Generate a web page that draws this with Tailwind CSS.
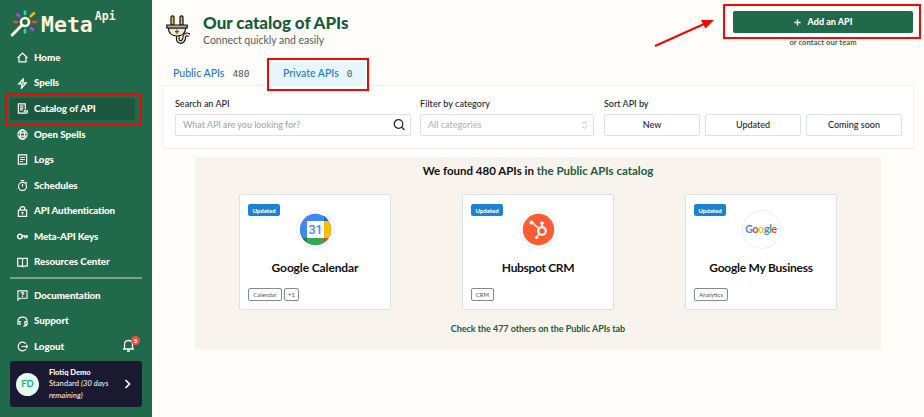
<!DOCTYPE html>
<html lang="en">
<head>
<meta charset="utf-8">
<title>Meta API</title>
<script src="https://cdn.jsdelivr.net/npm/@tailwindcss/browser@4"></script>
</head>
<body class="relative flex h-[417px] w-[924px] overflow-hidden bg-[#fffdfa] font-['Lato',sans-serif] text-[#212529]">
<aside class="flex h-full w-[152px] shrink-0 flex-col bg-[#20694a] px-2.5 text-[#fffdf5]">
  <div class="flex h-[45px] shrink-0 pt-[9px]">
    <svg class="h-[29px] w-[29px] shrink-0" viewBox="0 0 29 29" fill="none" stroke-width="2.700" stroke-linecap="round">
      <path d="M2.200 26L11.500 16.500" stroke="#fff3dc" stroke-width="3"/>
      <circle cx="15" cy="13" r="4" stroke="#fff3dc" stroke-width="2.700"/>
      <path d="M15 5V2.500M15 23.500V21" stroke="#14dcb4"/><path d="M9 7L7.500 5.500M21 19L23 21" stroke="#c13cf0"/>
      <path d="M20.700 7.300L24 4.200" stroke="#ffb000"/><path d="M7 13H4.300M23 13H25.700" stroke="#ff3b4e"/>
    </svg>
    <span class="ml-0.5 mt-[2px] font-['DejaVu_Sans_Mono',monospace] text-[21.500px] font-bold leading-[27px] text-[#fff3dc]">Meta</span>
    <span class="ml-[2px] mt-px font-['DejaVu_Sans_Mono',monospace] text-[11.500px] font-bold leading-[13px] text-[#fff3dc]">Api</span>
  </div>
  <nav class="flex flex-col text-[9.800px] font-black leading-none tracking-[-0.060px] [&>a]:flex [&>a]:h-[25.550px] [&>a]:items-center [&>a]:pl-[7px] [&_svg]:mr-1.5 [&_svg]:size-[11px] [&_svg]:shrink-0">
    <a><svg viewBox="0 0 12 12" fill="none" stroke="currentColor" stroke-width="1.300"><path d="M.5 6.500L6 1.200L11.500 6.500M2.200 5.200V10.800H9.800V5.200"/></svg>Home</a>
    <a><svg viewBox="0 0 12 12" fill="none" stroke="currentColor" stroke-width="1.400"><path d="M7 .8L2 6.500H5.500L4.800 11.200L10 5.200H6.500Z"/></svg>Spells</a>
    <a><span class="-ml-[7px] flex h-[22px] w-[125px] items-center rounded-[2px] bg-[#1d573f] pl-[7px]"><svg viewBox="0 0 12 12" fill="none" stroke="currentColor" stroke-width="1.300"><path d="M9 7V1H1.500V11H10.500Q11.500 11 11.500 8.500H8V10M3.300 3.500H7M3.300 5.500H7M3.300 7.500H6"/></svg>Catalog of API</span></a>
    <a><svg viewBox="0 0 12 12" fill="none" stroke="currentColor" stroke-width="1.200"><circle cx="6" cy="6" r="5"/><ellipse cx="6" cy="6" rx="2.200" ry="5"/><path d="M1.500 4.200H10.500M1.500 7.800H10.500"/></svg>Open Spells</a>
    <a><svg viewBox="0 0 12 12" fill="none" stroke="currentColor" stroke-width="1.300"><path d="M1.500 1H10.500V11H1.500ZM3.500 3.800H8.500M3.500 6H8.500M3.500 8.200H6.500"/></svg>Logs</a>
    <a><svg viewBox="0 0 12 12" fill="none" stroke="currentColor" stroke-width="1.300"><circle cx="6" cy="7" r="4.400"/><path d="M4 .6H8M6 4.300V7.300M9.500 2L11 3.500"/></svg>Schedules</a>
    <a><svg viewBox="0 0 12 12" fill="none" stroke="currentColor" stroke-width="1.300"><path d="M1.500 4.500H10.500V11.300H1.500ZM3.500 4.500V3Q3.500 .7 6 .7T8.500 3V4.500M6 6.500V9.300M4.800 7.200H7.200"/></svg><span class="tracking-[-0.150px]">API Authentication</span></a>
    <a><svg viewBox="0 0 12 12" fill="none" stroke="currentColor" stroke-width="1.500"><circle cx="3.200" cy="6" r="2.400"/><path d="M5.600 5.500H12M8.300 5.500V8M10.700 5.500V8"/></svg><span class="tracking-[-0.150px]">Meta-API Keys</span></a>
    <a><svg viewBox="0 0 12 12" fill="none" stroke="currentColor" stroke-width="1.300"><path d="M.8 1.500H4.800L6 2.200L7.200 1.500H11.200V10H7.200L6 10.700L4.800 10H.8ZM6 2.200V10.700"/></svg>Resources Center</a>
    <hr class="mb-[4px] mt-[2.500px] h-[1.500px] border-0 bg-[#78a38e]">
    <a><svg viewBox="0 0 12 12" fill="none" stroke="currentColor" stroke-width="1.200"><path d="M1 11V1H11V9H3ZM4.500 3.600Q4.700 2.700 6 2.700Q7.500 2.700 7.500 3.800Q7.500 4.600 6 5V5.900M6 6.600V7.700"/></svg><span class="tracking-[-0.150px]">Documentation</span></a>
    <a><svg viewBox="0 0 12 12" fill="none" stroke="currentColor" stroke-width="1.300"><path d="M1 8V6Q1 1.200 6 1.200T11 6V8.500Q11 11 7 11M1 6H3.400V9H1ZM11 6H8.600V9H11"/></svg>Support</a>
    <a><svg viewBox="0 0 12 12" fill="none" stroke="currentColor" stroke-width="1.300"><path d="M9.800 3A4.800 4.800 0 1 0 9.800 9M5 6H11.500M9.800 4.300L11.500 6L9.800 7.700"/></svg>Logout
      <span class="relative ml-auto mr-[7px] flex -translate-y-px"><svg class="!mr-0 !size-[13px]" viewBox="0 0 13 13" fill="none" stroke="currentColor" stroke-width="1.300"><path d="M1 10H12M2.500 10V5.500Q2.500 1.500 6.500 1.500T10.500 5.500V10M5 12H8"/></svg><b class="absolute -right-[5px] -top-[3px] flex size-[9px] items-center justify-center rounded-full bg-[#fa4848] text-[6px] font-black">5</b></span></a>
  </nav>
  <div class="mt-auto mb-2.5 flex h-[46px] items-center rounded-[3px] bg-[#1b1832] pl-1.5">
    <div class="flex size-[23px] items-center justify-center rounded-full bg-[#e6fcf1] text-[9.500px] font-bold text-[#20b478]">FD</div>
    <div class="ml-2.5 w-[68px] text-[7.500px] leading-[11.300px]"><b class="font-black">Flotiq Demo</b><br><span class="whitespace-nowrap tracking-[0.1px]">Standard <i>(30 days</i></span><br><i class="tracking-[0.1px]">remaining)</i></div>
    <svg class="ml-1.5 size-2.5" viewBox="0 0 10 10" fill="none" stroke="currentColor" stroke-width="1.700"><path d="M2.500 1L6.500 5L2.500 9"/></svg>
  </div>
</aside>
<main class="flex min-w-0 flex-1 flex-col pl-2.5 pr-2.5">
  <header class="flex h-[62px] shrink-0 justify-between">
    <div class="flex pt-[13px] pl-1">
      <svg class="mt-[2px] h-[29px] w-6" viewBox="0 0 24 29" stroke="#141414" stroke-width="1.200"><path d="M5 10V2Q5 .8 6.500 .8T8 2V10ZM14 10V2Q14 .8 15.500 .8T17 2V10Z" fill="#e5b84e"/><path d="M12 21Q11 27 14.500 27T18.500 21Q20 18 23.500 20.500" fill="none" stroke-width="3.800"/><path d="M12 21Q11 27 14.500 27T18.500 21Q20 18 23.500 20.500" fill="none" stroke="#eee2cd" stroke-width="1.600"/><path d="M2.200 13Q3 21 11 21Q19 21 19.800 13Z" fill="#f8e6c5"/><path d="M.8 10H21.200V13H.8Z" fill="#a8aaa8"/><path d="M11 14.500V19M9 16.700H13" fill="none" stroke="#20694a"/></svg>
      <div class="ml-[13px]"><h1 class="mt-px whitespace-nowrap text-[17px] font-black leading-[18px] tracking-[-0.050px] text-[#185c3c]">Our catalog of APIs</h1><p class="mt-[2px] text-[10.500px] leading-[12px] tracking-[-0.030px] text-[#555b60]">Connect quickly and easily</p></div>
    </div>
    <div class="mr-px w-[180px] pt-[11px] text-center">
      <button class="flex h-[22px] w-full items-center justify-center gap-[7px] rounded-[2px] bg-[#20694a] text-[9px] font-black text-white"><svg class="size-[7px]" viewBox="0 0 8 8" stroke="currentColor" stroke-width="1.600"><path d="M4 .5V7.500M.5 4H7.500"/></svg>Add an API</button>
      <p class="mt-[5px] text-[7.500px] font-bold leading-[9px] tracking-[0.080px] text-[#316950]">or contact our team</p>
    </div>
  </header>
  <div class="flex h-[23px] shrink-0 pb-px text-[10.500px] font-medium text-[#2378dc]">
    <div class="flex w-[109px] items-center pl-[11px] pt-[2px]">Public APIs<span class="ml-2 font-['DejaVu_Sans_Mono',monospace] text-[9.500px] text-[#555]">480</span></div>
    <div class="-mb-px flex w-[94px] items-center bg-[#e7f5ff] pl-3 pt-px">Private APIs<span class="ml-2 font-['DejaVu_Sans_Mono',monospace] text-[9.500px] text-[#555]">0</span></div>
  </div>
  <section class="flex h-[64px] shrink-0 gap-[9px] border border-[#eff1f4] bg-white pl-3 pt-3 text-[9px] font-medium leading-[12px] [&_label]:mb-[4px] [&_label]:block">
    <div class="w-[236px]"><label>Search an API</label><div class="flex h-[22px] items-center justify-between rounded-[2px] border border-[#dee2e6] pl-[7px] pr-[5px] text-[#a1a9b1]"><span class="tracking-[-0.040px]">What API are you looking for?</span><svg class="size-3 text-[#222]" viewBox="0 0 12 12" fill="none" stroke="currentColor" stroke-width="1.200"><circle cx="5.500" cy="5" r="4.300"/><path d="M8.500 8L11.500 11"/></svg></div></div>
    <div class="w-[174px]"><label class="tracking-[0.060px]">Filter by category</label><div class="flex h-[22px] items-center justify-between rounded-[2px] border border-[#dee2e6] pl-[7px] pr-1.5 text-[#adb5bd]">All categories<svg class="h-2 w-[5px]" viewBox="0 0 5 8" fill="none" stroke="currentColor" stroke-width=".9"><path d="M.5 2.500L2.500 .7L4.500 2.500M.5 5.500L2.500 7.300L4.500 5.500"/></svg></div></div>
    <div class="ml-px w-[298px]"><label>Sort API by</label><div class="grid grid-cols-3 gap-[5px] [&>div]:flex [&>div]:h-[22px] [&>div]:items-center [&>div]:justify-center [&>div]:rounded-[2px] [&>div]:border [&>div]:border-[#dee2e6]"><div>New</div><div>Updated</div><div>Coming soon</div></div></div>
  </section>
  <section class="ml-[33px] mt-2 h-[192px] w-[686px] rounded-[2px] bg-[#f8f3ed] pt-1.5 text-center">
    <h2 class="text-[11.500px] font-bold leading-[16px] text-[#111]">We found 480 APIs in <span class="text-[#205c41]">the Public APIs catalog</span></h2>
    <div class="mx-11 mt-[15px] flex justify-between [&>article]:flex [&>article]:h-[116px] [&>article]:w-[152px] [&>article]:flex-col [&>article]:rounded-[2px] [&>article]:border [&>article]:border-[#dee2e6] [&>article]:bg-white [&>article]:px-2 [&>article]:pt-[9px]">
      <article>
        <div class="grid grid-cols-[32px_1fr_32px] items-start"><b class="flex h-3 items-center justify-center rounded-[2px] bg-[#1c82d2] text-[6px] font-black text-white">Updated</b>
        <svg class="mx-auto mt-1.5 size-[39px]" viewBox="0 0 39 39"><defs><clipPath id="round"><circle cx="19.500" cy="19.500" r="15.700"/></clipPath></defs><circle cx="19.500" cy="19.500" r="18.800" fill="#fff" stroke="#eceef0"/><g clip-path="url(#round)"><path d="M3 3H36V36H3Z" fill="#4285f4"/><path d="M28 3H36V11H28Z" fill="#1967d2"/><path d="M28 11H36V28H28Z" fill="#fbbc04"/><path d="M11 28H28V36H11Z" fill="#34a853"/><path d="M3 28H11V36H3Z" fill="#188038"/><path d="M28 28H36V36H28Z" fill="#ea4335"/><path d="M11 11H28V28H11Z" fill="#fff"/></g><text x="19.500" y="24" text-anchor="middle" font-family="Roboto" font-size="12.500" font-weight="500" fill="#4285f4">31</text></svg></div>
        <h3 class="mt-[11px] text-[12px] font-bold leading-4 tracking-[-0.120px] text-[#111]">Google Calendar</h3>
        <div class="mt-[12px] flex gap-0.5 text-[6px] text-[#555] [&>span]:flex [&>span]:h-[13px] [&>span]:items-center [&>span]:justify-center [&>span]:rounded-[2px] [&>span]:border [&>span]:border-[#858a8e]"><span class="w-[34px]">Calendar</span><span class="w-[15px]">+1</span></div>
      </article>
      <article>
        <div class="grid grid-cols-[32px_1fr_32px] items-start"><b class="flex h-3 items-center justify-center rounded-[2px] bg-[#1c82d2] text-[6px] font-black text-white">Updated</b>
        <svg class="mx-auto mt-1.5 size-[39px]" viewBox="0 0 39 39" fill="none" stroke="#fff"><circle cx="19.500" cy="19.500" r="18.800" fill="#fff" stroke="#eceef0"/><circle cx="19.500" cy="19.500" r="15.700" fill="#ff5c35" stroke="none"/><circle cx="23" cy="21" r="3.800" stroke-width="2.200"/><path d="M23 17V13M20 18.500L13 12.500M20.500 24L17.500 27" stroke-width="1.600"/><g fill="#fff" stroke="none"><circle cx="23" cy="13" r="1.800"/><circle cx="12.500" cy="12.500" r="2"/><circle cx="17.500" cy="27.500" r="1.600"/></g></svg></div>
        <h3 class="mt-[11px] text-[12px] font-bold leading-4 tracking-[-0.330px] text-[#111]">Hubspot CRM</h3>
        <div class="mt-[12px] flex text-[6px] text-[#555]"><span class="flex h-[13px] w-[23px] items-center justify-center rounded-[2px] border border-[#858a8e]">CRM</span></div>
      </article>
      <article>
        <div class="grid grid-cols-[32px_1fr_32px] items-start"><b class="flex h-3 items-center justify-center rounded-[2px] bg-[#1c82d2] text-[6px] font-black text-white">Updated</b>
        <div class="mx-auto mt-1.5 flex size-[39px] items-center justify-center rounded-full border border-[#eceef0] text-[10.500px] font-bold tracking-[-0.300px]"><span class="text-[#4285f4]">G</span><span class="text-[#ea4335]">o</span><span class="text-[#fbbc04]">o</span><span class="text-[#4285f4]">g</span><span class="text-[#34a853]">l</span><span class="text-[#ea4335]">e</span></div></div>
        <h3 class="mt-[11px] whitespace-nowrap text-[12px] font-bold leading-4 tracking-[-0.240px] text-[#111]">Google My Business</h3>
        <div class="mt-[12px] flex text-[6px] text-[#555]"><span class="flex h-[13px] w-[34px] items-center justify-center rounded-[2px] border border-[#858a8e]">Analytics</span></div>
      </article>
    </div>
    <p class="mt-3 text-[9px] font-bold leading-[14px] tracking-[-0.040px] text-[#205c41]">Check the 477 others on the Public APIs tab</p>
  </section>
</main>
<div class="absolute left-[5px] top-[93px] h-[32px] w-[137px] border-2 border-[#fa0505]"></div>
<div class="absolute left-[267px] top-[58px] h-[33px] w-[102px] border-2 border-[#fa0505]"></div>
<div class="absolute left-[723px] top-[4px] h-[35px] w-[198px] border-2 border-[#fa0505]"></div>
<svg class="absolute left-[650px] top-[15px] h-9 w-[70px]" viewBox="0 0 70 36"><path d="M5 31L54 9" stroke="#fa0505" stroke-width="2"/><path d="M64 5L51 5L55.500 13.500Z" fill="#fa0505"/></svg>
</body>
</html>
